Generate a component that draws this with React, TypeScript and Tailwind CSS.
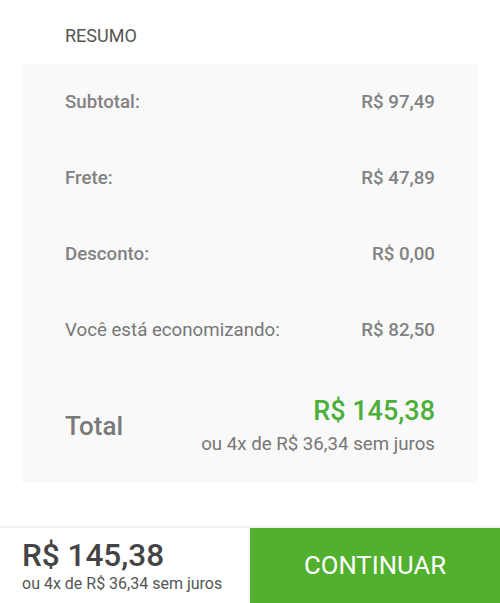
import React from "react";

const rows = [
  { label: "Subtotal:", value: "R$ 97,49", medium: true },
  { label: "Frete:", value: "R$ 47,89", medium: true },
  { label: "Desconto:", value: "R$ 0,00", medium: true },
  { label: "Você está economizando:", value: "R$ 82,50", medium: false },
];

export default function App() {
  return (
    <div
      className="w-[500px] h-[603px] bg-white flex flex-col"
      style={{ fontFamily: "Roboto, 'Noto Sans', sans-serif" }}
    >
      <div className="pt-[25px] pl-[65px] h-[64px] text-[18px] leading-[22px] text-[#555555]">
        RESUMO
      </div>

      <div className="mx-[22px] bg-[#f9f9f9] px-[43px]">
        {rows.map((r) => (
          <div
            key={r.label}
            className="h-[76px] flex items-center justify-between text-[18.7px] text-[#828282]"
          >
            <span className={r.medium ? "font-medium" : "font-normal text-[#777777]"}>
              {r.label}
            </span>
            <span className="font-medium">{r.value}</span>
          </div>
        ))}

        <div className="h-[115px] flex items-center justify-between">
          <span className="text-[26px] font-medium text-[#7a7a7a] mt-[2px]">
            Total
          </span>
          <div className="flex flex-col items-end gap-[6px]">
            <span className="text-[27px] leading-[30px] font-medium text-[#4caf3a]">
              R$ 145,38
            </span>
            <span className="text-[18.7px] leading-[24px] text-[#777777]">
              ou 4x de R$ 36,34 sem juros
            </span>
          </div>
        </div>
      </div>

      <div className="flex-1" />

      <div className="h-[76px] flex border-t border-[#eeeeee] shadow-[0_-1px_3px_rgba(0,0,0,0.05)]">
        <div className="w-[250px] pl-[22px] flex flex-col justify-center">
          <span className="text-[31.5px] leading-[36px] font-medium text-[#444444]">
            R$ 145,38
          </span>
          <span className="text-[16px] leading-[20px] text-[#555555]">
            ou 4x de R$ 36,34 sem juros
          </span>
        </div>
        <button className="w-[250px] bg-[#52b02f] text-white text-[25.7px] flex items-center justify-center">
          CONTINUAR
        </button>
      </div>
    </div>
  );
}
